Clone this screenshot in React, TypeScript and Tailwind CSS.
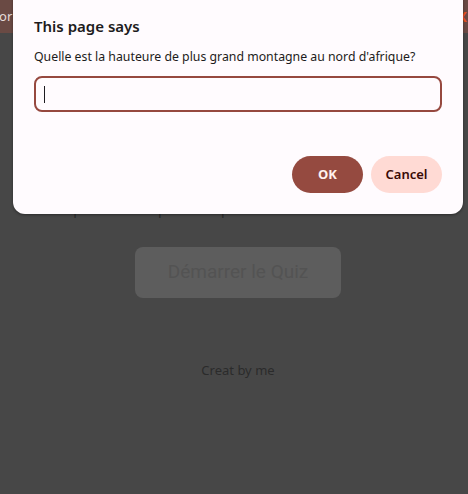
import React from 'react';

export default function App() {
  return (
    <div className="relative w-[468px] h-[494px] overflow-hidden bg-[#474747] font-['Noto_Sans',sans-serif]">
      {/* page behind the dimmed overlay */}
      <header className="h-[33px] bg-[#6a4a44] flex items-center justify-between">
        <span className="ml-[-46px] text-[13px] text-[#e6dcda]">Professor</span>
        <span className="mr-[1px] text-[14px] font-bold text-[#e8501e]">X</span>
      </header>

      <main className="flex flex-col items-center pl-[8px]">
        <p className="mt-[166px] text-[14px] leading-[20px] text-[#2a2a2a]">Répondez aux questions pour tester vos connaissances</p>
        <button className="mt-[28px] w-[206px] h-[51px] rounded-[8px] bg-[#5d5d5d] text-[19px] text-[#535353] font-['Roboto',sans-serif]">
          Démarrer le Quiz
        </button>
        <footer className="mt-[63px] text-[13px] text-[#2b2b2b]">Creat by me</footer>
      </main>

      {/* prompt dialog */}
      <div className="absolute left-[13px] top-[-20px] w-[450px] rounded-[12px] bg-[#fffbfe] shadow-[0_1px_3px_rgba(0,0,0,0.4)] pt-[36px] px-[21px] pb-[21px]">
        <h2 className="text-[15px] font-semibold leading-[20px] text-[#1d1b20]">This page says</h2>
        <p className="mt-[12px] text-[12.3px] leading-[18px] text-[#1d1b20]">
          Quelle est la hauteure de plus grand montagne au nord d'afrique?
        </p>
        <div className="mt-[10px] h-[36px] rounded-[8px] border-2 border-[#96483f] flex items-center pl-[8px]">
          <span className="w-px h-[17px] bg-[#1d1b20]" />
        </div>
        <div className="mt-[44px] flex justify-end gap-[8px]">
          <button className="w-[71px] h-[37px] rounded-full bg-[#954a40] text-[13px] font-bold text-[#fff1ee]">OK</button>
          <button className="w-[71px] h-[37px] rounded-full bg-[#ffdad4] text-[13px] font-semibold text-[#3a0b06]">Cancel</button>
        </div>
      </div>
    </div>
  );
}
